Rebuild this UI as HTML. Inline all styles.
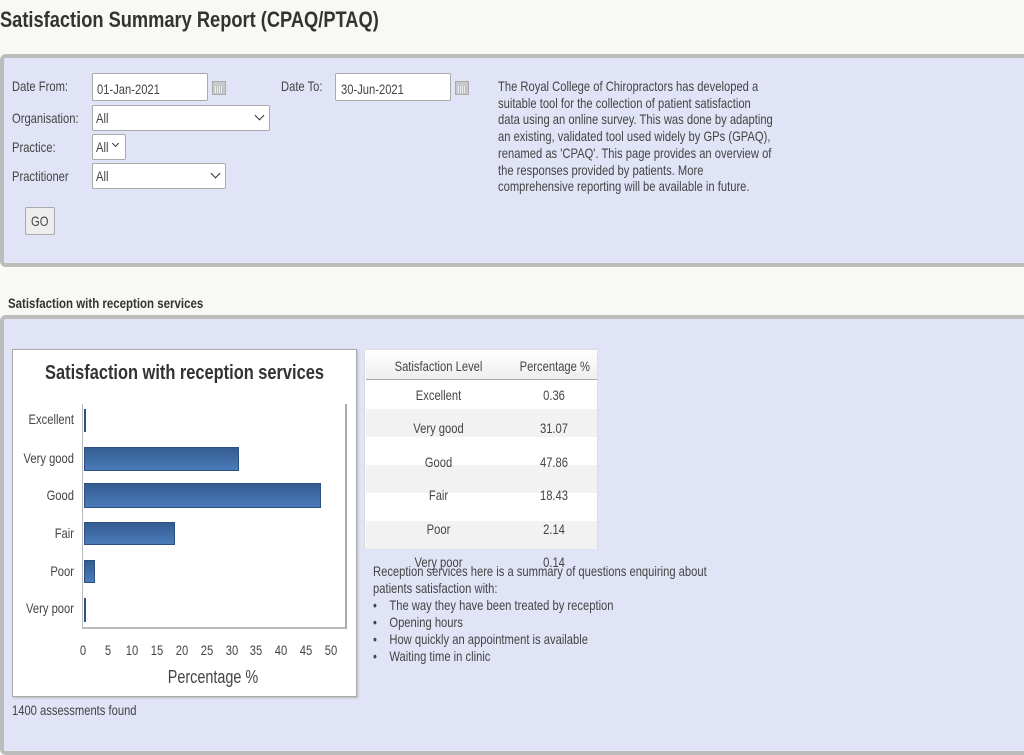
<!DOCTYPE html>
<html><head><meta charset="utf-8"><style>
*{margin:0;padding:0;box-sizing:border-box}
body{width:1024px;height:740px;background:#f8f9f4;position:relative;overflow:hidden;font-family:"Liberation Sans",sans-serif;color:#444}
.t{position:absolute;white-space:nowrap;transform:scaleX(.8);transform-origin:0 0;font-size:14px;line-height:16.7px}
.c{transform-origin:50% 0;text-align:center}
.r{transform-origin:100% 0;text-align:right}
.panel{position:absolute;left:0;width:1030px;background:#e0e4f6;border:4px solid #bcbcbc;border-radius:6px}
.box{position:absolute;background:#fff;border:1px solid #aaa;border-radius:2px}
.cal{position:absolute;width:14px;height:14px;background:#c9c9c9;border:1px solid #aaa}
.cal:after{content:"";position:absolute;left:2px;top:4px;width:8px;height:7px;background:repeating-linear-gradient(90deg,#eee 0 1px,#bbb 1px 2px)}
.chev{position:absolute;width:7px;height:7px;border-right:1.5px solid #333;border-bottom:1.5px solid #333;transform:rotate(45deg)}
.bar{position:absolute;left:84px;background:linear-gradient(#345d92,#4a7bb8);border:1px solid #2c5080}
.row{position:absolute;left:366px;width:231px;height:28px}
</style></head><body>
<div class="t" style="left:0;top:7px;font-size:22px;font-weight:bold;line-height:26px;color:#333;transform:scaleX(.83)">Satisfaction Summary Report (CPAQ/PTAQ)</div>

<div class="panel" style="top:54px;height:213px"></div>
<div class="t" style="left:12px;top:78px">Date From:</div>
<div class="box" style="left:92px;top:73px;width:116px;height:28px"></div>
<div class="t" style="left:97px;top:81px">01-Jan-2021</div>
<div class="cal" style="left:212px;top:81px"></div>
<div class="t" style="left:281px;top:78px">Date To:</div>
<div class="box" style="left:335px;top:73px;width:116px;height:28px"></div>
<div class="t" style="left:341px;top:81px">30-Jun-2021</div>
<div class="cal" style="left:455px;top:81px"></div>
<div class="t" style="left:12px;top:110px">Organisation:</div>
<div class="box" style="left:92px;top:105px;width:178px;height:26px"></div>
<div class="t" style="left:96px;top:110px">All</div>
<div class="chev" style="left:256px;top:112px"></div>
<div class="t" style="left:12px;top:139px">Practice:</div>
<div class="box" style="left:92px;top:134px;width:34px;height:26px"></div>
<div class="t" style="left:96px;top:139px">All</div>
<div class="chev" style="left:113px;top:141px;width:5px;height:5px"></div>
<div class="t" style="left:12px;top:168px">Practitioner</div>
<div class="box" style="left:92px;top:163px;width:134px;height:26px"></div>
<div class="t" style="left:96px;top:168px">All</div>
<div class="chev" style="left:212px;top:170px"></div>
<div style="position:absolute;left:25px;top:207px;width:30px;height:28px;background:#eee;border:1px solid #aaa;border-radius:2px"></div>
<div class="t" style="left:31px;top:213px">GO</div>
<div class="t" style="left:498px;top:78px">The Royal College of Chiropractors has developed a<br>suitable tool for the collection of patient satisfaction<br>data using an online survey. This was done by adapting<br>an existing, validated tool used widely by GPs (GPAQ),<br>renamed as 'CPAQ'. This page provides an overview of<br>the responses provided by patients. More<br>comprehensive reporting will be available in future.</div>

<div class="t" style="left:8px;top:295px;font-weight:bold;color:#333;transform:scaleX(.82)">Satisfaction with reception services</div>
<div class="panel" style="top:315px;height:440px"></div>

<div style="position:absolute;left:12px;top:349px;width:345px;height:348px;background:#fff;border:1px solid #aaa;box-shadow:1px 1px 2px #bbb"></div>
<div class="t c" style="left:12px;width:345px;top:361px;font-size:20px;font-weight:bold;line-height:24px;color:#333;transform:scaleX(.82)">Satisfaction with reception services</div>
<div style="position:absolute;left:82px;top:404px;width:1px;height:225px;background:#bbb"></div>
<div style="position:absolute;left:82px;top:627px;width:264px;height:2px;background:#bbb"></div>
<div style="position:absolute;left:345px;top:404px;width:2px;height:225px;background:#aaa"></div>
<div class="bar" style="top:409px;height:23px;width:2px"></div>
<div class="bar" style="top:447px;height:24px;width:155px"></div>
<div class="bar" style="top:483px;height:25px;width:237px"></div>
<div class="bar" style="top:522px;height:23px;width:91px"></div>
<div class="bar" style="top:560px;height:23px;width:11px"></div>
<div class="bar" style="top:598px;height:24px;width:1px"></div>
<div class="t r" style="left:0;width:74px;top:411px">Excellent</div>
<div class="t r" style="left:0;width:74px;top:450px">Very good</div>
<div class="t r" style="left:0;width:74px;top:487px">Good</div>
<div class="t r" style="left:0;width:74px;top:525px">Fair</div>
<div class="t r" style="left:0;width:74px;top:563px">Poor</div>
<div class="t r" style="left:0;width:74px;top:600px">Very poor</div>
<div class="t c" style="left:63px;width:40px;top:642px">0</div>
<div class="t c" style="left:88px;width:40px;top:642px">5</div>
<div class="t c" style="left:112px;width:40px;top:642px">10</div>
<div class="t c" style="left:137px;width:40px;top:642px">15</div>
<div class="t c" style="left:162px;width:40px;top:642px">20</div>
<div class="t c" style="left:187px;width:40px;top:642px">25</div>
<div class="t c" style="left:212px;width:40px;top:642px">30</div>
<div class="t c" style="left:236px;width:40px;top:642px">35</div>
<div class="t c" style="left:261px;width:40px;top:642px">40</div>
<div class="t c" style="left:286px;width:40px;top:642px">45</div>
<div class="t c" style="left:311px;width:40px;top:642px">50</div>
<div class="t c" style="left:113px;width:200px;top:667px;font-size:18px;line-height:20px">Percentage %</div>
<div class="t" style="left:12px;top:702px">1400 assessments found</div>

<div style="position:absolute;left:364px;top:349px;width:234px;height:199px;background:#fff;border:1px solid #ddd"></div>
<div class="row" style="top:350px;height:30px;background:linear-gradient(#fff,#eee);border-bottom:1px solid #aaa"></div>
<div class="row" style="top:409px;background:#f2f2f2"></div>
<div class="row" style="top:465px;background:#f2f2f2"></div>
<div class="row" style="top:521px;background:#f2f2f2"></div>
<div class="t c" style="left:366px;width:145px;top:358px">Satisfaction Level</div>
<div class="t c" style="left:511px;width:86px;top:358px">Percentage %</div>
<div class="t c" style="left:366px;width:145px;top:387px">Excellent<br><br>Very good<br><br>Good<br><br>Fair<br><br>Poor<br><br>Very poor</div>
<div class="t c" style="left:511px;width:86px;top:387px;line-height:16.7px">0.36<br><br>31.07<br><br>47.86<br><br>18.43<br><br>2.14<br><br>0.14</div>

<div class="t" style="left:373px;top:563px;line-height:17px">Reception services here is a summary of questions enquiring about<br>patients satisfaction with:<br>•&nbsp;&nbsp;&nbsp;&nbsp;The way they have been treated by reception<br>•&nbsp;&nbsp;&nbsp;&nbsp;Opening hours<br>•&nbsp;&nbsp;&nbsp;&nbsp;How quickly an appointment is available<br>•&nbsp;&nbsp;&nbsp;&nbsp;Waiting time in clinic</div>
</body></html>
